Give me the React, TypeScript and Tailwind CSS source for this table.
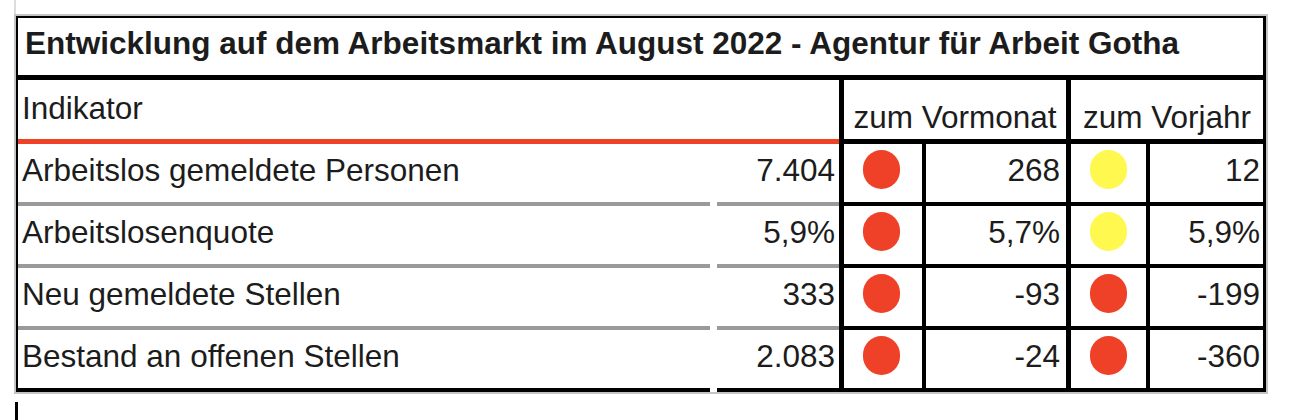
import React from "react";

/* ================= DATA ================= */

type Ampel = "rot" | "gelb";

type Row = {
  label: string;
  value: string;
  monthDot: Ampel;
  month: string;
  yearDot: Ampel;
  year: string;
};

const ROWS: Row[] = [
  { label: "Arbeitslos gemeldete Personen", value: "7.404", monthDot: "rot", month: "268", yearDot: "gelb", year: "12" },
  { label: "Arbeitslosenquote", value: "5,9%", monthDot: "rot", month: "5,7%", yearDot: "gelb", year: "5,9%" },
  { label: "Neu gemeldete Stellen", value: "333", monthDot: "rot", month: "-93", yearDot: "rot", year: "-199" },
  { label: "Bestand an offenen Stellen", value: "2.083", monthDot: "rot", month: "-24", yearDot: "rot", year: "-360" },
];

/* ================= HELPERS ================= */

function Dot({ color }: { color: Ampel }) {
  return (
    <span
      className={
        color === "rot"
          ? "block h-[39px] w-[37px] rounded-full bg-[#ee4127]"
          : "block h-[39px] w-[37px] rounded-full bg-[#fff84e]"
      }
    />
  );
}

const V = () => <div className="bg-black" />;

function Separator({ last }: { last: boolean }) {
  return (
    <>
      <div className={last ? "bg-black" : "bg-[#9a9a9a]"} />
      <div className="bg-white" />
      <div className={last ? "bg-black" : "bg-[#9a9a9a]"} />
      <div className="col-span-8 bg-black" />
    </>
  );
}

/* ================= PAGE ================= */

export default function App() {
  return (
    <div className="min-h-[420px] bg-white font-['Liberation_Sans',Arial,sans-serif] text-[#1c1c1c]">
      <div className="ml-[14px] w-[1254px]">
        <div className="h-[14px] w-[2px] bg-[#dcdcdc]" />

        <div className="border-2 border-b-2 border-[#c4c4c4]">
          <div className="border-l-2 border-t-2 border-r-[3px] border-black">
            <div className="grid grid-cols-[692px_7px_122px_5px_78px_4px_140px_5px_75px_4px_113px] grid-rows-[57px_5px_59px_5px_58px_4px_58px_4px_58px_4px_58px_4px] text-[31.5px] leading-[36px]">
              {/* Titel */}
              <div className="col-span-11 pl-[7px] pt-[7px] font-bold whitespace-nowrap">
                Entwicklung auf dem Arbeitsmarkt im August 2022 - Agentur für Arbeit Gotha
              </div>
              <div className="col-span-11 bg-black" />

              {/* Kopfzeile */}
              <div className="col-span-3 pl-[4px] pt-[10px]">Indikator</div>
              <V />
              <div className="col-span-3 flex items-end justify-center pb-[4px] whitespace-nowrap">
                zum Vormonat
              </div>
              <V />
              <div className="col-span-3 flex items-end justify-center pb-[4px] whitespace-nowrap">
                zum Vorjahr
              </div>
              <div className="col-span-3 bg-[#ee4127]" />
              <div className="col-span-8 bg-black" />

              {/* Zeilen */}
              {ROWS.map((r, i) => (
                <React.Fragment key={r.label}>
                  <div className="flex items-center pb-[7px] pl-[4px] whitespace-nowrap">{r.label}</div>
                  <div />
                  <div className="flex items-center justify-end pb-[7px] pr-[4px]">{r.value}</div>
                  <V />
                  <div className="flex items-center justify-center pb-[8px] pr-[4px]">
                    <Dot color={r.monthDot} />
                  </div>
                  <V />
                  <div className="flex items-center justify-end pb-[7px] pr-[6px]">{r.month}</div>
                  <V />
                  <div className="flex items-center justify-center pb-[8px]">
                    <Dot color={r.yearDot} />
                  </div>
                  <V />
                  <div className="flex items-center justify-end pb-[7px] pr-[3px]">{r.year}</div>
                  <Separator last={i === ROWS.length - 1} />
                </React.Fragment>
              ))}
            </div>
          </div>
        </div>

        <div className="ml-px mt-[8px] h-[18px] w-[3px] bg-black" />
      </div>
    </div>
  );
}
